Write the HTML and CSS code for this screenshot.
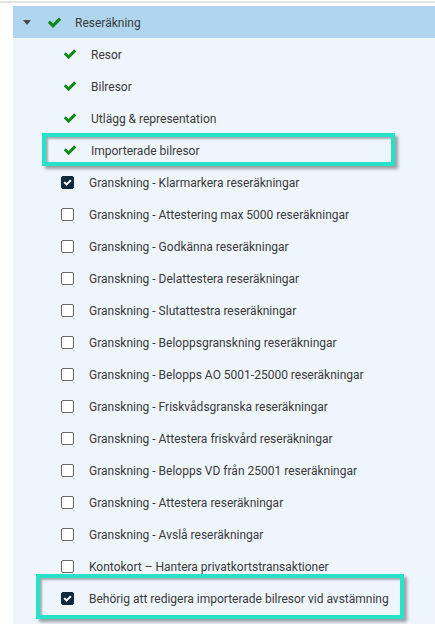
FILE: index.html
```html
<!DOCTYPE html>
<html lang="sv">
<head>
<meta charset="utf-8">
<title>Reseräkning</title>
<link rel="stylesheet" href="styles.css">
</head>
<body>
<div class="topline"></div>
<div class="tree">
  <div class="header">
    <span class="caret"></span>
    <svg class="ok ok-lg" viewBox="0 0 1792 1792"><path d="M1671 566q0 40-28 68l-724 724-136 136q-28 28-68 28t-68-28l-136-136-362-362q-28-28-28-68t28-68l136-136q28-28 68-28t68 28l294 295 656-657q28-28 68-28t68 28l136 136q28 28 28 68z"/></svg>
    <span class="label">Reseräkning</span>
  </div>
  <ul class="list">
    <li class="row sub"><svg class="ok" viewBox="0 0 1792 1792"><path d="M1671 566q0 40-28 68l-724 724-136 136q-28 28-68 28t-68-28l-136-136-362-362q-28-28-28-68t28-68l136-136q28-28 68-28t68 28l294 295 656-657q28-28 68-28t68 28l136 136q28 28 28 68z"/></svg><span class="label">Resor</span></li>
    <li class="row sub"><svg class="ok" viewBox="0 0 1792 1792"><path d="M1671 566q0 40-28 68l-724 724-136 136q-28 28-68 28t-68-28l-136-136-362-362q-28-28-28-68t28-68l136-136q28-28 68-28t68 28l294 295 656-657q28-28 68-28t68 28l136 136q28 28 28 68z"/></svg><span class="label">Bilresor</span></li>
    <li class="row sub"><svg class="ok" viewBox="0 0 1792 1792"><path d="M1671 566q0 40-28 68l-724 724-136 136q-28 28-68 28t-68-28l-136-136-362-362q-28-28-28-68t28-68l136-136q28-28 68-28t68 28l294 295 656-657q28-28 68-28t68 28l136 136q28 28 28 68z"/></svg><span class="label">Utlägg &amp; representation</span></li>
    <li class="row sub hl hl-a"><svg class="ok" viewBox="0 0 1792 1792"><path d="M1671 566q0 40-28 68l-724 724-136 136q-28 28-68 28t-68-28l-136-136-362-362q-28-28-28-68t28-68l136-136q28-28 68-28t68 28l294 295 656-657q28-28 68-28t68 28l136 136q28 28 28 68z"/></svg><span class="label">Importerade bilresor</span></li>
    <li class="row cb"><span class="box checked"><svg viewBox="0 0 1792 1792"><path d="M1671 566q0 40-28 68l-724 724-136 136q-28 28-68 28t-68-28l-136-136-362-362q-28-28-28-68t28-68l136-136q28-28 68-28t68 28l294 295 656-657q28-28 68-28t68 28l136 136q28 28 28 68z"/></svg></span><span class="label">Granskning - Klarmarkera reseräkningar</span></li>
    <li class="row cb"><span class="box"></span><span class="label">Granskning - Attestering max 5000 reseräkningar</span></li>
    <li class="row cb"><span class="box"></span><span class="label">Granskning - Godkänna reseräkningar</span></li>
    <li class="row cb"><span class="box"></span><span class="label">Granskning - Delattestera reseräkningar</span></li>
    <li class="row cb"><span class="box"></span><span class="label">Granskning - Slutattestra reseräkningar</span></li>
    <li class="row cb"><span class="box"></span><span class="label">Granskning - Beloppsgranskning reseräkningar</span></li>
    <li class="row cb"><span class="box"></span><span class="label">Granskning - Belopps AO 5001-25000 reseräkningar</span></li>
    <li class="row cb"><span class="box"></span><span class="label">Granskning - Friskvådsgranska reseräkningar</span></li>
    <li class="row cb"><span class="box"></span><span class="label">Granskning - Attestera friskvård reseräkningar</span></li>
    <li class="row cb"><span class="box"></span><span class="label">Granskning - Belopps VD från 25001 reseräkningar</span></li>
    <li class="row cb"><span class="box"></span><span class="label">Granskning - Attestera reseräkningar</span></li>
    <li class="row cb"><span class="box"></span><span class="label">Granskning - Avslå reseräkningar</span></li>
    <li class="row cb"><span class="box"></span><span class="label">Kontokort – Hantera privatkortstransaktioner</span></li>
    <li class="row cb hl hl-b"><span class="box checked"><svg viewBox="0 0 1792 1792"><path d="M1671 566q0 40-28 68l-724 724-136 136q-28 28-68 28t-68-28l-136-136-362-362q-28-28-28-68t28-68l136-136q28-28 68-28t68 28l294 295 656-657q28-28 68-28t68 28l136 136q28 28 28 68z"/></svg></span><span class="label">Behörig att redigera importerade bilresor vid avstämning</span></li>
    <li class="row cb"><span class="box"></span></li>
  </ul>
</div>
</body>
</html>
```

FILE: styles.css
```css
html, body {
  margin: 0;
  padding: 0;
  height: 624px;
  overflow: hidden;
  background: #ffffff;
}

body {
  font-family: Roboto, "Liberation Sans", Arial, sans-serif;
  font-size: 12px;
  color: #3a3a3a;
}

.topline {
  height: 2px;
  margin-top: 1px;
  background: #e3e3e3;
}

.tree {
  margin: 3px 0 0 13px;
  background: #eef5fd;
  height: 640px;
}

.header {
  display: flex;
  align-items: center;
  height: 32px;
  background: #b0d6ef;
  padding-left: 10px;
}

.caret {
  width: 0;
  height: 0;
  border-left: 4px solid transparent;
  border-right: 4px solid transparent;
  border-top: 5px solid #4a4a4a;
  margin-right: 16px;
}

.ok {
  width: 14px;
  height: 14px;
  fill: #13861b;
  flex: none;
}

.ok-lg {
  width: 15px;
  height: 15px;
  margin-right: 13px;
}

.list {
  list-style: none;
  margin: 0;
  padding: 0;
}

.row {
  display: flex;
  align-items: center;
  height: 32px;
  position: relative;
}

.sub {
  padding-left: 50px;
}

.sub .ok {
  margin-right: 14px;
}

.cb {
  padding-left: 48px;
}

.box {
  width: 13px;
  height: 13px;
  box-sizing: border-box;
  border: 1px solid #6a6a6a;
  border-radius: 2px;
  background: #ffffff;
  margin-right: 15px;
  display: flex;
  align-items: center;
  justify-content: center;
  flex: none;
}

.box.checked {
  background: #0f2a3e;
  border-color: #0f2a3e;
}

.box svg {
  width: 9px;
  height: 9px;
  fill: #ffffff;
}

.label {
  white-space: nowrap;
  padding-top: 2px;
}

.hl::after {
  content: "";
  position: absolute;
  box-sizing: border-box;
  border: 4px solid #27e2c9;
  box-shadow: 3px 3px 3px rgba(0, 0, 0, 0.35), inset 2px 2px 2px rgba(0, 0, 0, 0.3);
  pointer-events: none;
}

.hl-a::after {
  left: 29px;
  top: -1px;
  width: 353px;
  height: 33px;
}

.hl-b::after {
  left: 23px;
  top: -8px;
  width: 368px;
  height: 45px;
}
```
